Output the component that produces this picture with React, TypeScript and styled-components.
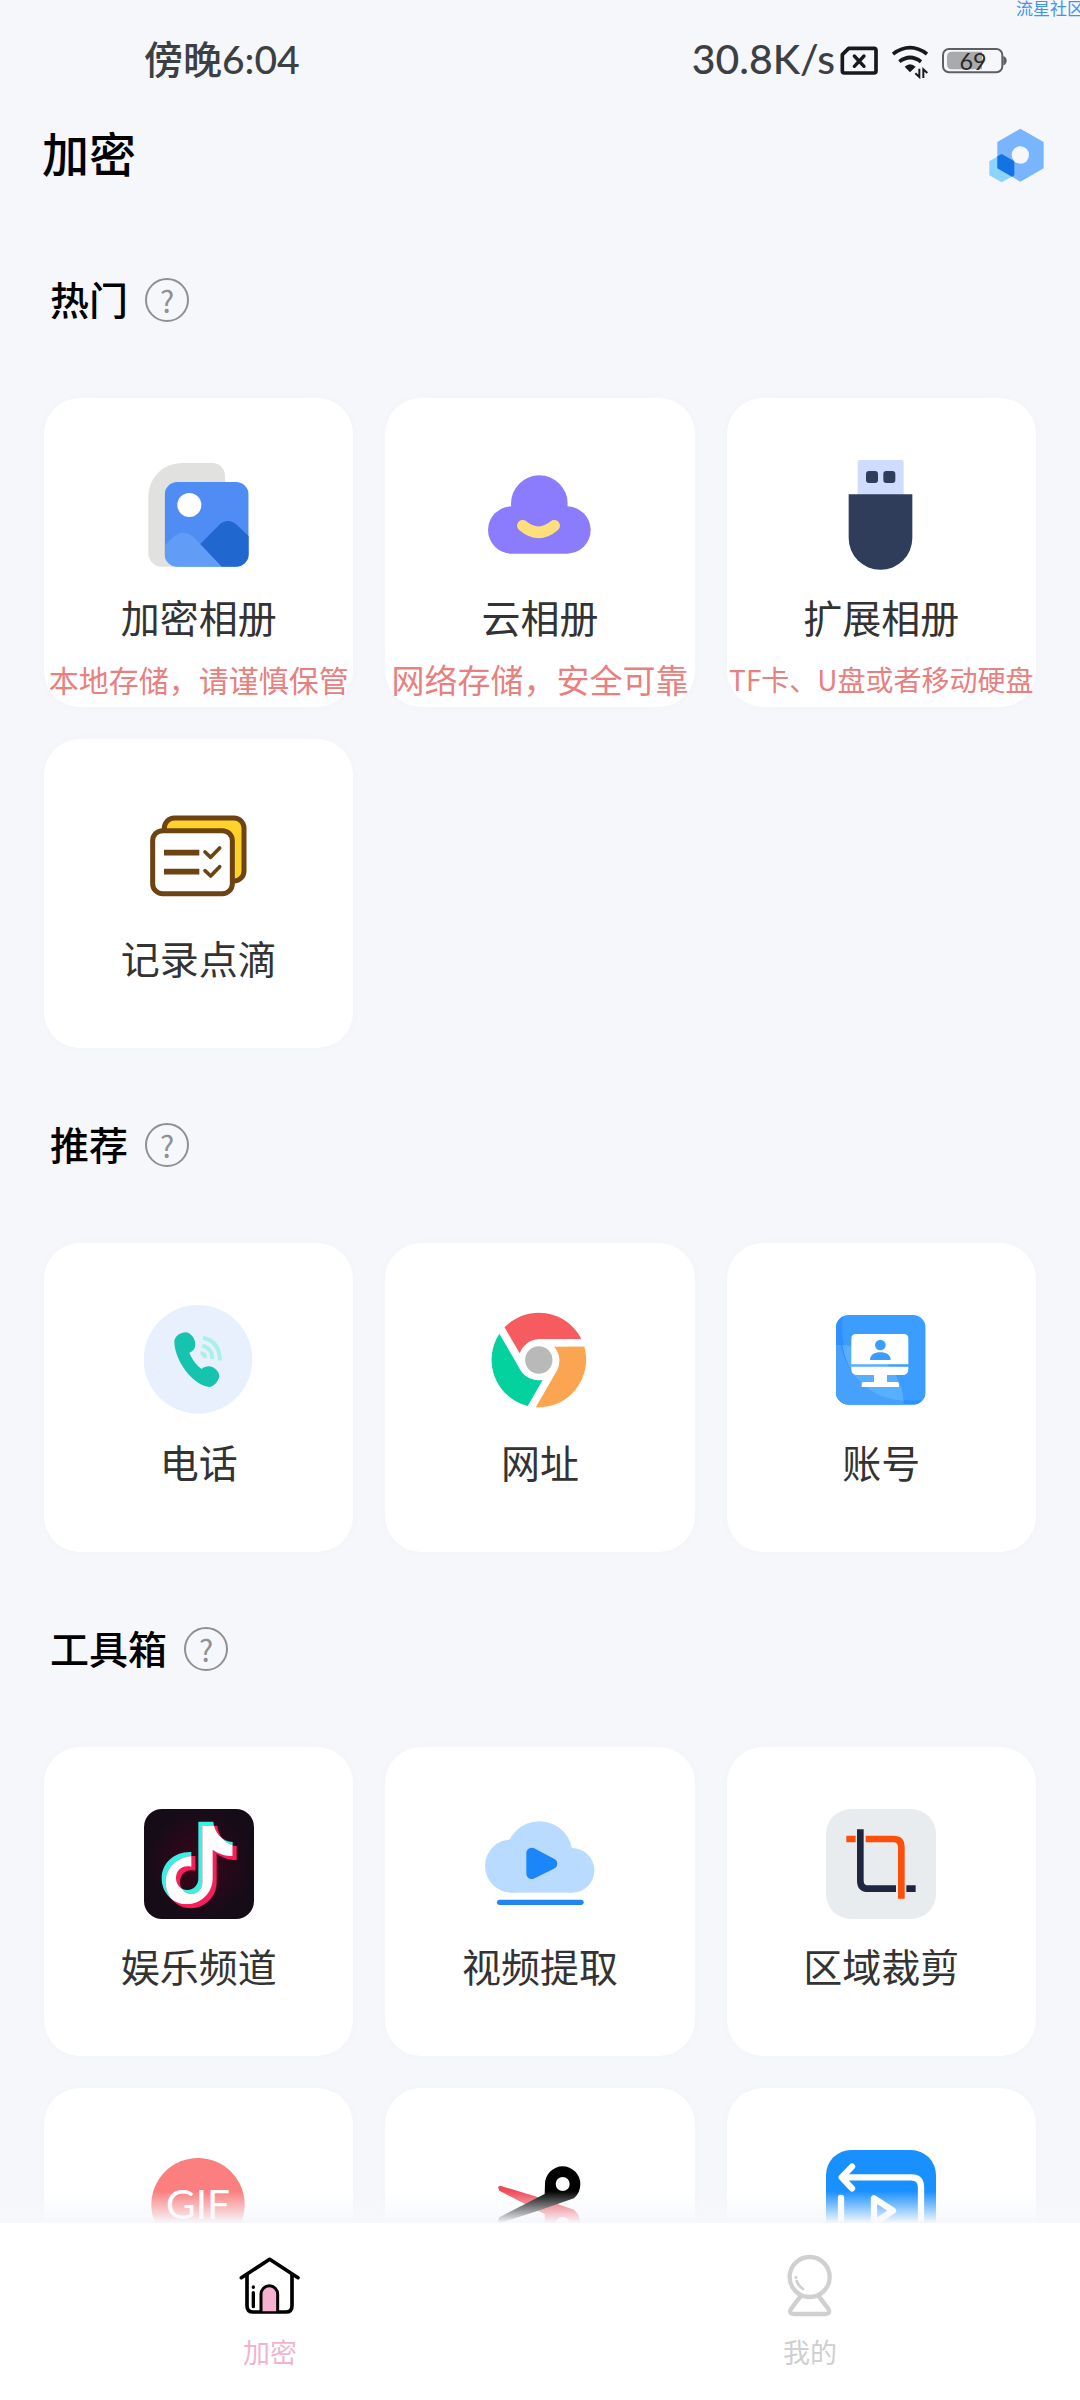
import React from "react";
import styled, { createGlobalStyle } from "styled-components";

const GlobalStyle = createGlobalStyle`
  *, *::before, *::after { box-sizing: border-box; }
  body {
    margin: 0;
    background: #f5f7fb;
    font-family: "Noto Sans CJK SC", "Noto Sans", sans-serif;
  }
  button { font-family: inherit; }
`;

const Page = styled.div`
  position: relative;
  display: flex;
  flex-direction: column;
  height: 100vh;
  overflow: hidden;
  background: #f5f7fb;
`;

const Watermark = styled.span`
  position: absolute;
  top: 0;
  right: -4px;
  font-size: 17px;
  line-height: 16px;
  color: #3f93ee;
`;

const StatusBar = styled.div`
  display: flex;
  flex: none;
  align-items: center;
  justify-content: space-between;
  height: 120px;
  padding: 0 73px 0 144px;
`;

const StatusText = styled.span<{ $size: number }>`
  padding-bottom: 2px;
  color: #3d4043;
  font-family: Lato, "Noto Sans CJK SC", sans-serif;
  font-size: ${(p) => p.$size}px;
  font-weight: 500;
  line-height: 56px;
`;

const StatusIcons = styled.div`
  display: flex;
  align-items: center;
  gap: 14px;
`;

const Speed = styled.div`
  display: flex;
  align-items: center;
  gap: 5px;
`;

const TitleBar = styled.header`
  display: flex;
  flex: none;
  align-items: center;
  justify-content: space-between;
  height: 70px;
  padding: 0 36px 0 42px;
`;

const Title = styled.h1`
  margin: 0;
  padding-bottom: 6px;
  font-size: 47px;
  line-height: 64px;
  font-weight: 500;
  color: #000;
`;

const PlainButton = styled.button`
  display: flex;
  padding: 0;
  border: 0;
  background: none;
  cursor: pointer;
`;

const Content = styled.main`
  flex: 1;
  min-height: 0;
  padding: 13px 44px 0;
  overflow-y: auto;
  scrollbar-width: none;
`;

const SectionHead = styled.div`
  display: flex;
  align-items: center;
  gap: 17px;
  height: 195px;
  padding: 0 0 2px 6px;
`;

const SectionTitle = styled.h2`
  margin: 0;
  padding-bottom: 4px;
  font-size: 39px;
  line-height: 56px;
  font-weight: 500;
  color: #000;
`;

const HelpButton = styled.button`
  display: flex;
  align-items: center;
  justify-content: center;
  width: 44px;
  height: 44px;
  padding: 0;
  border: 2px solid #8e9094;
  border-radius: 50%;
  background: none;
  color: #8e9094;
  font-size: 30px;
  font-weight: 400;
  line-height: 40px;
  cursor: pointer;
`;

const Grid = styled.div`
  display: grid;
  grid-template-columns: repeat(3, minmax(0, 1fr));
  gap: 32px;
`;

const Card = styled.button`
  display: flex;
  flex-direction: column;
  align-items: center;
  justify-content: flex-start;
  min-height: 309px;
  padding: 62px 0 0;
  border: 0;
  border-radius: 36px;
  background: #fff;
  box-shadow: 0 0 12px rgba(60, 70, 100, 0.02);
  cursor: pointer;
`;

const CardIcon = styled.svg`
  flex: none;
  width: 110px;
  height: 110px;
`;

const CardLabel = styled.span`
  margin-top: 18px;
  font-size: 39px;
  line-height: 56px;
  color: #333;
  white-space: nowrap;
`;

const CardNote = styled.span<{ $size: number }>`
  margin-top: 12px;
  font-size: ${(p) => p.$size}px;
  line-height: 46px;
  color: #e88080;
  white-space: nowrap;
`;

const Nav = styled.nav`
  position: relative;
  display: flex;
  flex: none;
  background: #fff;

  &::before {
    content: "";
    position: absolute;
    right: 0;
    bottom: 100%;
    left: 0;
    height: 32px;
    background: linear-gradient(rgba(246, 248, 252, 0), #f6f8fc);
    pointer-events: none;
  }
`;

const NavItem = styled.button<{ $active?: boolean }>`
  display: flex;
  flex: 1;
  flex-direction: column;
  align-items: center;
  gap: 13px;
  padding: 30px 0 28px;
  border: 0;
  background: none;
  color: ${(p) => (p.$active ? "#efb4d0" : "#cfcfcf")};
  font-size: 27px;
  line-height: 40px;
  cursor: pointer;
`;

const SimIcon = () => (
  <svg width="38" height="29" viewBox="597 135 114 87" fill="none" stroke="#17191c" strokeLinecap="round">
    <path d="M623 142H699q6 0 6 6V210q0 6-6 6H610q-6 0-6-6V161Z" strokeWidth="11" strokeLinejoin="round" />
    <path d="M640 165L669 196M669 165L640 196" strokeWidth="10" />
  </svg>
);

const WifiIcon = () => (
  <svg width="36" height="37" viewBox="750 126 108 111" fill="none" stroke="#17191c">
    <path d="M753 162Q804 124 855 162" strokeWidth="11" />
    <path d="M772 185Q804 160 837 185" strokeWidth="11" />
    <path d="M788 200Q804 185 821 200L804 217Z" fill="#17191c" stroke="none" />
    <path d="M832 206V231L820 220M844 234V208L856 219" strokeWidth="6" />
  </svg>
);

const BatteryIcon = () => (
  <svg width="65" height="27" viewBox="906 138 195 81">
    <rect x="909" y="144" width="178" height="70" rx="18" fill="none" stroke="#5d5f62" strokeWidth="6" />
    <path d="M1090 165q10 4 10 14t-10 14Z" fill="#5d5f62" />
    <path d="M936 152H1026V205H936q-15 0-15-15V167q0-15 15-15Z" fill="#a9aaac" />
    <text x="999" y="206" textAnchor="middle" fontSize="70" fill="#26282b" fontFamily="Lato, sans-serif">
      69
    </text>
  </svg>
);

const HexIcon = () => (
  <svg width="55" height="55" viewBox="1046 381 165 165">
    <path d="M1084 459L1122 481V523L1084 544L1047 523V481Z" fill="#8ad4fd" />
    <path d="M1140 383L1210 423V502L1140 542L1071 502V423Z" fill="#79b4ff" />
    <path d="M1071 466L1084 459L1122 481V523L1115 527L1071 502Z" fill="#1373e3" />
    <circle cx="1140" cy="462" r="26" fill="#f5f7fb" />
  </svg>
);

const AlbumIcon = () => (
  <CardIcon viewBox="341 240 330 330">
    <clipPath id="photo">
      <rect x="403" y="306" width="252" height="254" rx="38" />
    </clipPath>
    <path d="M454 249H546a38 38 0 0 1 38 38V330H430V560H394a40 40 0 0 1-40-40V349a100 100 0 0 1 100-100Z" fill="#e1e1df" />
    <g clipPath="url(#photo)">
      <rect x="403" y="306" width="252" height="254" fill="#4f8df5" />
      <path d="M403 497L428 472Q460 445 490 472L578 562H403Z" fill="#619cf7" />
      <path d="M510 492L564 437Q592 409 622 437L656 469V562H576Z" fill="#2167d0" />
    </g>
    <circle cx="477" cy="375" r="36" fill="#fff" />
  </CardIcon>
);

const CloudIcon = () => (
  <CardIcon viewBox="345 240 330 330">
    <circle cx="508" cy="371" r="85" fill="#8b7bfd" />
    <rect x="354" y="379" width="308" height="142" rx="71" fill="#8b7bfd" />
    <path d="M458 437Q506 477 553 437" fill="none" stroke="#ffdf7c" strokeWidth="34" strokeLinecap="round" />
  </CardIcon>
);

const UsbIcon = () => (
  <CardIcon viewBox="349 240 330 330">
    <path d="M450 240H576q6 0 6 6V345H444V246q0-6 6-6Z" fill="#cfdcfe" />
    <rect x="469" y="273" width="36" height="36" rx="9" fill="#2f3d5a" />
    <rect x="521" y="273" width="36" height="36" rx="9" fill="#2f3d5a" />
    <path d="M417 343H608V474A95.5 95.5 0 0 1 417 474Z" fill="#2f3d5a" />
  </CardIcon>
);

const NotesIcon = () => (
  <CardIcon viewBox="341 214 330 330" fill="none" stroke="#6d4311" strokeWidth="15">
    <rect x="402" y="265" width="239" height="189" rx="30" fill="#ffd22b" />
    <rect x="367" y="303" width="239" height="189" rx="30" fill="#fff" />
    <path d="M401 369H507M401 426H507" strokeWidth="17" />
    <path d="M524 367L541 383L568 355M524 423L541 439L568 411" strokeWidth="11" strokeLinecap="round" strokeLinejoin="round" />
  </CardIcon>
);

const PhoneIcon = () => (
  <CardIcon viewBox="341 225 330 330">
    <circle cx="503" cy="388" r="163" fill="#e8f0fe" />
    <path
      d="M467 307C484 310 495 328 495 344C495 355 487 364 477 368C484 386 498 405 514 417C522 409 536 407 546 411C558 416 567 428 567 440C562 456 551 470 536 471C488 466 432 392 432 334C434 318 450 307 467 307Z"
      fill="#16c3ae"
    />
    <path d="M518 323Q567 333 569 391M516 347Q546 355 546 388M511 370Q524 371 525 384" fill="none" stroke="#a9f1e7" strokeWidth="12" />
  </CardIcon>
);

const CHROME_BLADE = "M403.5 292L449 370A64 64 0 0 1 506.500 327H634A143 143 0 0 0 403.500 292Z";

const ChromeIcon = () => (
  <CardIcon viewBox="345 225 330 330">
    <path d={CHROME_BLADE} fill="#f65b60" />
    <path d={CHROME_BLADE} fill="#fba452" transform="rotate(120 506.5 390)" />
    <path d={CHROME_BLADE} fill="#04d29e" transform="rotate(240 506.5 390)" />
    <circle cx="506.5" cy="390" r="41" fill="#b9b9b9" />
  </CardIcon>
);

const AccountIcon = () => (
  <CardIcon viewBox="1369 225 330 330">
    <clipPath id="tile">
      <rect x="1399" y="255" width="269" height="269" rx="38" />
    </clipPath>
    <g clipPath="url(#tile)">
      <rect x="1399" y="255" width="269" height="269" fill="#3b9dff" />
      <path d="M1399 255H1420C1400 400 1500 522 1668 512V524H1399Z" fill="#2c91fc" />
      <path d="M1399 345H1414C1428 430 1500 506 1601 513L1603 524H1399Z" fill="#47a0fc" />
      <path d="M1418 345C1520 350 1596 420 1602 513C1500 506 1434 440 1418 345Z" fill="#58aeff" />
    </g>
    <path d="M1459 312H1602q14 0 14 14V403H1445V326q0-14 14-14Z" fill="#fff" />
    <path d="M1445 410H1616V417q0 18-18 18H1552V456H1582q6 0 6 6V471H1476V462q0-6 6-6H1513V435H1463q-18 0-18-18Z" fill="#fff" />
    <circle cx="1532" cy="345" r="16" fill="#3b9dff" />
    <path d="M1501 390C1501 374 1515 367 1532 367S1563 374 1563 390Z" fill="#3b9dff" />
  </CardIcon>
);

const NOTE_SHAPE =
  "M503 275H548C550 307 575 334 606 336V378C584 378 563 371 546 359V445C546 488 512 523 468 523C428 523 393 490 393 445C393 400 430 364 482 366V410C450 404 436 424 436 445C436 464 450 480 470 480C490 480 503 465 503 445Z";

const ChannelIcon = () => (
  <CardIcon viewBox="340 237 330 330">
    <radialGradient id="night">
      <stop offset="0" stopColor="#3c0419" />
      <stop offset="1" stopColor="#150c18" />
    </radialGradient>
    <clipPath id="note">
      <path d={NOTE_SHAPE} />
    </clipPath>
    <rect x="340" y="237" width="330" height="330" rx="54" fill="url(#night)" />
    <path d={NOTE_SHAPE} fill="#38f0e4" />
    <path d={NOTE_SHAPE} fill="#f5205a" transform="translate(12 12)" />
    <g clipPath="url(#note)">
      <path d={NOTE_SHAPE} fill="#fff" transform="translate(12 12)" />
    </g>
  </CardIcon>
);

const VideoIcon = () => (
  <CardIcon viewBox="1363 237 330 330">
    <g fill="#b9dbff">
      <circle cx="1443" cy="408" r="80" />
      <circle cx="1526" cy="374" r="100" />
      <circle cx="1624" cy="421" r="67" />
      <rect x="1442" y="400" width="182" height="88" />
    </g>
    <path d="M1503 369V431L1564 401Z" fill="#1b86fa" stroke="#1b86fa" strokeWidth="32" strokeLinejoin="round" />
    <rect x="1399" y="509" width="260" height="16" rx="8" fill="#2286f0" />
  </CardIcon>
);

const CropIcon = () => (
  <CardIcon viewBox="828 237 330 330" fill="none" strokeWidth="20">
    <rect x="828" y="237" width="330" height="330" rx="75" fill="#e9ecef" />
    <path d="M931 298V452Q931 476 955 476H1038M1069 476H1097" stroke="#1f2740" />
    <path d="M889 327H917M947 327H1030Q1054 327 1054 351V506" stroke="#fc4f0c" />
  </CardIcon>
);

const GifIcon = () => (
  <CardIcon viewBox="341 240 330 330">
    <circle cx="503" cy="404" r="140" fill="#fb7f7f" />
    <text x="503" y="446" textAnchor="middle" fontSize="122" fill="#fff" fontFamily="Lato, sans-serif">
      GIF
    </text>
  </CardIcon>
);

const ScissorsIcon = () => (
  <CardIcon viewBox="1365 240 330 330">
    <path d="M1404 352Q1408 344 1420 350L1520 380L1632 419Q1651 436 1651 462A53 53 0 0 1 1545 462L1544 432L1408 362Z" fill="#f04b58" />
    <circle cx="1598" cy="462" r="21" fill="#fff" />
    <path d="M1404 452Q1408 462 1420 456L1520 424L1632 385Q1651 368 1651 342A53 53 0 0 0 1545 342L1544 372L1408 442Z" fill="#000" />
    <circle cx="1598" cy="342" r="21" fill="#fff" />
  </CardIcon>
);

const ReverseIcon = () => (
  <CardIcon viewBox="2389 240 330 330" fill="none" stroke="#fff" strokeWidth="19" strokeLinecap="round" strokeLinejoin="round">
    <rect x="2389" y="240" width="330" height="330" rx="75" fill="#1990ff" stroke="none" />
    <path d="M2467 290L2436 322L2467 355M2440 322H2645Q2674 322 2674 351V500" />
    <path d="M2434 384V470Q2434 495 2459 495H2600" />
    <path d="M2533 385V460L2590 422Z" />
  </CardIcon>
);

const HomeIcon = () => (
  <svg width="66" height="66" viewBox="111 129 198 198" fill="none" stroke="#000" strokeLinecap="round" strokeLinejoin="round">
    <path d="M124 203L209 148L294 203" strokeWidth="11" />
    <path d="M141 196V287Q141 306 160 306H257Q276 306 276 287V196" strokeWidth="11" />
    <path d="M183 304V253a25 26 0 0 1 50 0V304" fill="#f4b2cf" strokeWidth="9" />
    <path d="M160 231V232M160 248V290" strokeWidth="10" />
  </svg>
);

const MineIcon = () => (
  <svg width="66" height="66" viewBox="1731 129 198 198" fill="none" stroke="#d0d0d0" strokeLinecap="round" strokeLinejoin="round">
    <circle cx="1829" cy="201" r="60" strokeWidth="13" />
    <path d="M1801 260L1774 295Q1764 311 1782 312H1876Q1894 311 1884 295L1857 260" strokeWidth="13" />
    <path d="M1788 202V203M1790 213Q1795 228 1809 237" strokeWidth="8" />
  </svg>
);

type Tool = {
  name: string;
  icon: React.ReactNode;
  note?: string;
  noteSize?: number;
  iconOnly?: boolean;
};

const SECTIONS: { title: string; tools: Tool[] }[] = [
  {
    title: "热门",
    tools: [
      { name: "加密相册", icon: <AlbumIcon />, note: "本地存储，请谨慎保管", noteSize: 30 },
      { name: "云相册", icon: <CloudIcon />, note: "网络存储，安全可靠", noteSize: 33 },
      { name: "扩展相册", icon: <UsbIcon />, note: "TF卡、U盘或者移动硬盘", noteSize: 28 },
      { name: "记录点滴", icon: <NotesIcon /> },
    ],
  },
  {
    title: "推荐",
    tools: [
      { name: "电话", icon: <PhoneIcon /> },
      { name: "网址", icon: <ChromeIcon /> },
      { name: "账号", icon: <AccountIcon /> },
    ],
  },
  {
    title: "工具箱",
    tools: [
      { name: "娱乐频道", icon: <ChannelIcon /> },
      { name: "视频提取", icon: <VideoIcon /> },
      { name: "区域裁剪", icon: <CropIcon /> },
      { name: "GIF", icon: <GifIcon />, iconOnly: true },
      { name: "剪辑", icon: <ScissorsIcon />, iconOnly: true },
      { name: "倒放", icon: <ReverseIcon />, iconOnly: true },
    ],
  },
];

export default function App() {
  return (
    <>
      <GlobalStyle />
      <Page>
        <Watermark>流星社区</Watermark>
        <StatusBar>
          <StatusText $size={39}>傍晚6:04</StatusText>
          <StatusIcons>
            <Speed>
              <StatusText $size={41}>30.8K/s</StatusText>
              <SimIcon />
            </Speed>
            <WifiIcon />
            <BatteryIcon />
          </StatusIcons>
        </StatusBar>
        <TitleBar>
          <Title>加密</Title>
          <PlainButton type="button" aria-label="设置">
            <HexIcon />
          </PlainButton>
        </TitleBar>
        <Content>
          {SECTIONS.map((section) => (
            <section key={section.title}>
              <SectionHead>
                <SectionTitle>{section.title}</SectionTitle>
                <HelpButton type="button">?</HelpButton>
              </SectionHead>
              <Grid>
                {section.tools.map((tool) => (
                  <Card key={tool.name} type="button" aria-label={tool.name}>
                    {tool.icon}
                    {!tool.iconOnly && <CardLabel>{tool.name}</CardLabel>}
                    {tool.note && <CardNote $size={tool.noteSize ?? 30}>{tool.note}</CardNote>}
                  </Card>
                ))}
              </Grid>
            </section>
          ))}
        </Content>
        <Nav>
          <NavItem type="button" $active aria-current="page">
            <HomeIcon />
            <span>加密</span>
          </NavItem>
          <NavItem type="button">
            <MineIcon />
            <span>我的</span>
          </NavItem>
        </Nav>
      </Page>
    </>
  );
}
